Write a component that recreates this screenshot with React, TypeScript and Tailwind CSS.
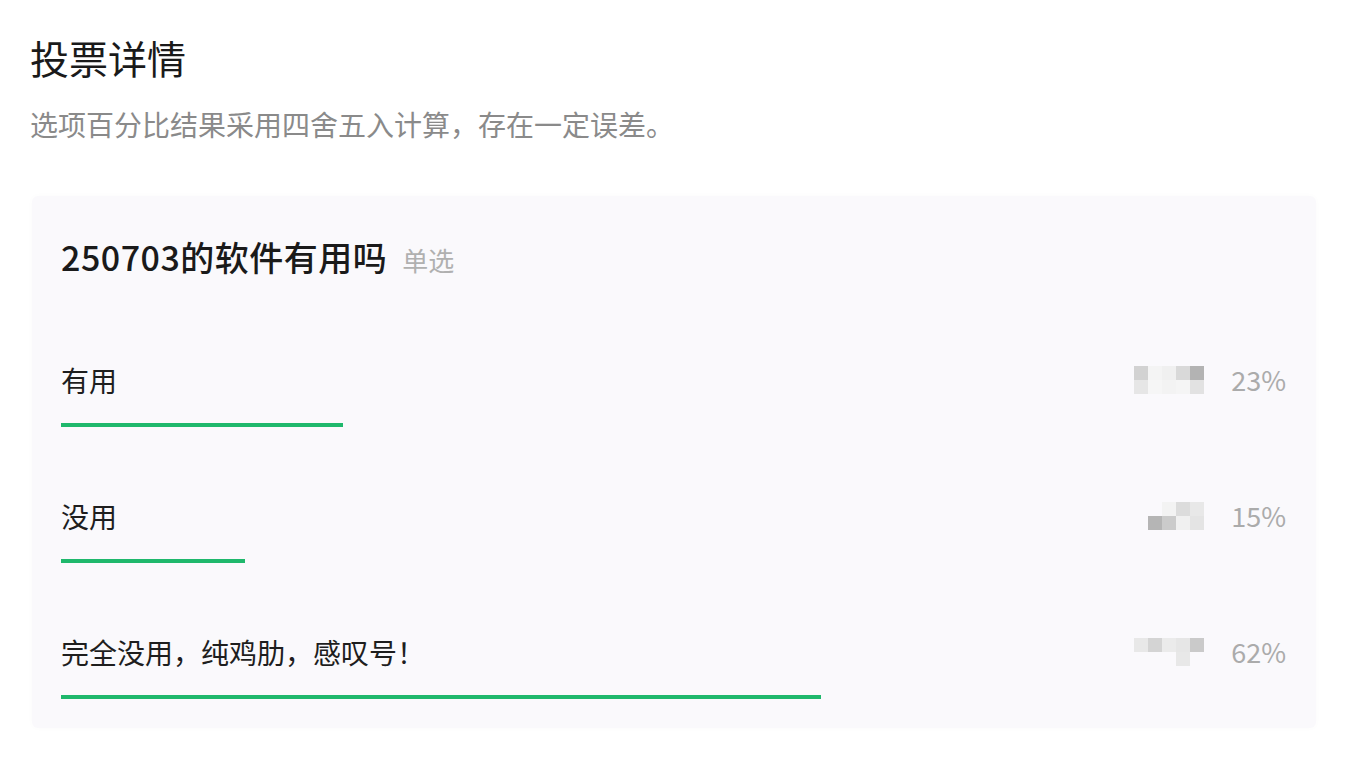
import React from "react";

interface OptionData {
  label: string;
  pct: number;
  // mosaic cells: [col, row, gray value]
  mosaic: [number, number, string][];
}

const OPTIONS: OptionData[] = [
  {
    label: "有用",
    pct: 23,
    mosaic: [
      [0, 0, "#d2d2d2"],
      [1, 0, "#f4f4f4"],
      [2, 0, "#f0f0f0"],
      [3, 0, "#d9d9d9"],
      [4, 0, "#b3b3b3"],
      [0, 1, "#e6e6e6"],
      [1, 1, "#f6f6f6"],
      [2, 1, "#f3f3f3"],
      [3, 1, "#f5f5f5"],
      [4, 1, "#e2e2e2"],
    ],
  },
  {
    label: "没用",
    pct: 15,
    mosaic: [
      [2, 0, "#f3f3f3"],
      [3, 0, "#dcdcdc"],
      [4, 0, "#e8e8e8"],
      [1, 1, "#b5b5b5"],
      [2, 1, "#cbcbcb"],
      [3, 1, "#f0f0f0"],
      [4, 1, "#e4e4e4"],
    ],
  },
  {
    label: "完全没用，纯鸡肋，感叹号！",
    pct: 62,
    mosaic: [
      [0, 0, "#e8e8e8"],
      [1, 0, "#d4d4d4"],
      [2, 0, "#ebebeb"],
      [3, 0, "#e6e6e6"],
      [4, 0, "#cacaca"],
      [3, 1, "#e8e8e8"],
    ],
  },
];

function Mosaic({ cells }: { cells: [number, number, string][] }) {
  return (
    <svg width="70" height="28" viewBox="0 0 70 28" className="shrink-0">
      {cells.map(([c, r, fill], i) => (
        <rect key={i} x={c * 14} y={r * 14} width="14" height="14" fill={fill} />
      ))}
    </svg>
  );
}

export default function App() {
  return (
    <div
      className="min-h-[762px] w-[1356px] bg-white pl-[30px] pt-[33px]"
      style={{ fontFamily: '"Noto Sans CJK SC", "Noto Sans", sans-serif' }}
    >
      <h1 className="text-[39px] leading-[48px] text-[#1a1a1a] font-normal">投票详情</h1>
      <p className="mt-[23px] text-[28px] leading-[40px] text-[#8a8a8a]">
        选项百分比结果采用四舍五入计算，存在一定误差。
      </p>

      <div className="mt-[52px] ml-[2px] w-[1284px] rounded-[6px] bg-[#faf9fc] px-[29px] pt-[39px] pb-[29px] shadow-[0_0_6px_rgba(0,0,0,0.02)]">
        <div className="flex items-baseline gap-[15px] leading-[44px]">
          <span className="text-[34px] tracking-[0.5px] font-medium text-[#1a1a1a]">250703的软件有用吗</span>
          <span className="text-[26px] text-[#b0b0b0]">单选</span>
        </div>

        <div className="mt-[78px] flex flex-col gap-[69px]">
          {OPTIONS.map((opt) => (
            <div key={opt.label} className="pr-[1px]">
              <div className="flex items-center justify-between leading-[40px]">
                <span className="text-[28px] text-[#1e1e1e]">{opt.label}</span>
                <div className="flex items-center gap-[24px]">
                  <Mosaic cells={opt.mosaic} />
                  <span className="w-[58px] text-right text-[27px] text-[#ababab]">{opt.pct}%</span>
                </div>
              </div>
              <div className="mt-[23px] h-[4px] w-full">
                <div className="h-full bg-[#1fb86c]" style={{ width: `${opt.pct}%` }} />
              </div>
            </div>
          ))}
        </div>
      </div>
    </div>
  );
}
